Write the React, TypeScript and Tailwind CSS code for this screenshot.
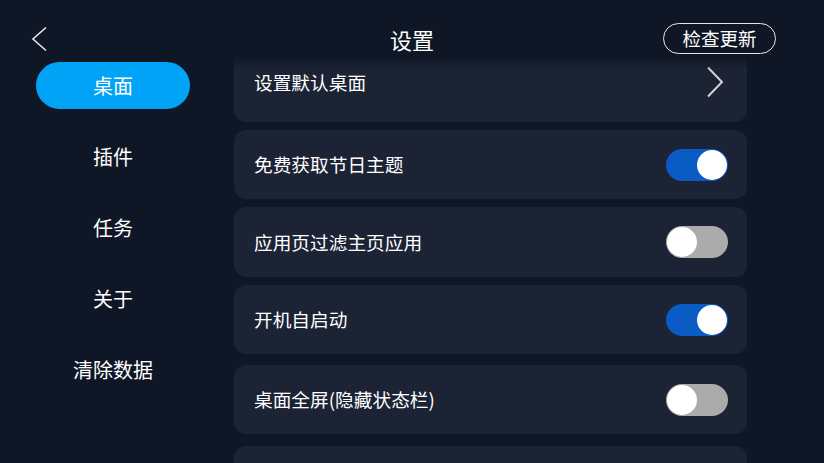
const font = { fontFamily: '"Noto Sans CJK SC", "Noto Sans", sans-serif' };

type Row = { label: string; kind: 'link' | 'toggle'; on?: boolean; gap: string; h: string };

const rows: Row[] = [
  { label: '设置默认桌面', kind: 'link', gap: 'mb-2', h: 'h-[80px]' },
  { label: '免费获取节日主题', kind: 'toggle', on: true, gap: 'mb-2', h: 'h-[69px]' },
  { label: '应用页过滤主页应用', kind: 'toggle', on: false, gap: 'mb-2', h: 'h-[70px]' },
  { label: '开机自启动', kind: 'toggle', on: true, gap: 'mb-[11px]', h: 'h-[69px]' },
  { label: '桌面全屏(隐藏状态栏)', kind: 'toggle', on: false, gap: 'mb-[12px]', h: 'h-[69px]' },
  { label: '', kind: 'link', gap: '', h: 'h-[69px]' },
];

const menu = ['桌面', '插件', '任务', '关于', '清除数据'];

function Toggle({ on }: { on?: boolean }) {
  return (
    <div
      className={`flex h-[32px] w-[62px] items-center rounded-full px-[1px] ${
        on ? 'justify-end bg-[#0a5bc4]' : 'justify-start bg-[#ababab]'
      }`}
    >
      <div className="h-[30px] w-[30px] rounded-full bg-white" />
    </div>
  );
}

export default function App() {
  return (
    <div className="flex h-[463px] w-[824px] flex-col overflow-hidden bg-[#0f1727] text-white" style={font}>
      {/* header */}
      <div className="grid h-[56px] grid-cols-[1fr_auto_1fr] items-center pt-[21px]">
        <div className="pl-[31px]">
          <svg width="18" height="26" viewBox="0 0 18 26" fill="none">
            <polyline points="15,1.5 2,13 15,24.5" stroke="#e6e6e6" strokeWidth="1.6" strokeLinejoin="miter" />
          </svg>
        </div>
        <div className="text-[22px] leading-none">设置</div>
        <div className="flex justify-end pr-[48px]">
          <div className="flex h-[31px] w-[113px] items-center justify-center rounded-full border-[1.5px] border-[#e8e8e8] text-[18.5px] leading-none">
            检查更新
          </div>
        </div>
      </div>

      {/* body */}
      <div className="flex min-h-0 flex-1">
        <div className="mt-[-6px] w-[234px] shrink-0">
          {menu.map((m, i) => (
            <div key={m} className="flex h-[71px] items-center justify-center">
              {i === 0 ? (
                <div className="mr-[8px] flex h-[47px] w-[154px] items-center justify-center rounded-full bg-[#00a3f5] text-[20px]">
                  {m}
                </div>
              ) : (
                <span className="mr-[8px] text-[20px]">{m}</span>
              )}
            </div>
          ))}
        </div>

        <div className="relative min-h-0 w-[513px] overflow-hidden">
          <div className="mt-[-14px]">
            {rows.map((r, i) => (
              <div
                key={i}
                className={`flex ${r.h} ${r.gap} items-center justify-between rounded-[12px] bg-[#1b2334] pl-[20px] pr-[19px] text-[18.7px]`}
              >
                <span>{r.label}</span>
                {r.kind === 'toggle' ? (
                  <Toggle on={r.on} />
                ) : r.label ? (
                  <svg width="22" height="32" viewBox="0 0 22 32" fill="none" className="mr-[1px]">
                    <polyline points="3,1.5 17,16 3,30.5" stroke="#d4d4d4" strokeWidth="2" />
                  </svg>
                ) : null}
              </div>
            ))}
          </div>
          <div className="pointer-events-none absolute left-0 right-0 top-0 h-[14px] bg-gradient-to-b from-[#0f1727] to-transparent" />
        </div>
      </div>
    </div>
  );
}
